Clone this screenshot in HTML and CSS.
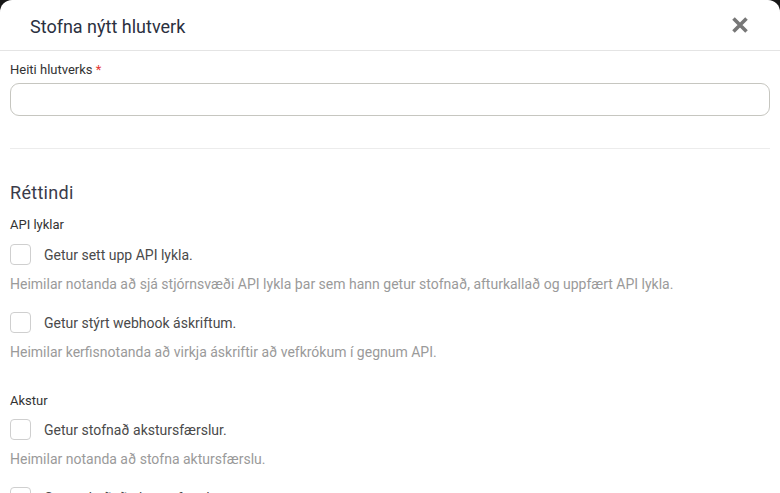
FILE: index.html
```html
<!DOCTYPE html>
<html lang="is">
<head>
<meta charset="utf-8">
<title>Stofna nýtt hlutverk</title>
<link rel="stylesheet" href="styles.css">
</head>
<body>
<div class="modal">
  <header class="modal-header">
    <h1 class="modal-title">Stofna nýtt hlutverk</h1>
    <button class="close-btn" aria-label="Loka">
      <svg width="18" height="18" viewBox="0 0 18 18"><path d="M2.5 2.5 L15.5 15.5 M15.5 2.5 L2.5 15.5" stroke="#777" stroke-width="3.6" stroke-linecap="butt"/></svg>
    </button>
  </header>
  <div class="modal-body">
    <label class="field-label">Heiti hlutverks <span class="req">*</span></label>
    <input class="text-input" type="text">
    <hr class="divider">
    <h2 class="section-title">Réttindi</h2>

    <div class="group">
      <div class="group-label">API lyklar</div>
      <div class="perm">
        <label class="check-row"><span class="checkbox"></span><span class="check-text">Getur sett upp API lykla.</span></label>
        <p class="desc">Heimilar notanda að sjá stjórnsvæði API lykla þar sem hann getur stofnað, afturkallað og uppfært API lykla.</p>
      </div>
      <div class="perm">
        <label class="check-row"><span class="checkbox"></span><span class="check-text">Getur stýrt webhook áskriftum.</span></label>
        <p class="desc">Heimilar kerfisnotanda að virkja áskriftir að vefkrókum í gegnum API.</p>
      </div>
    </div>

    <div class="group">
      <div class="group-label">Akstur</div>
      <div class="perm">
        <label class="check-row"><span class="checkbox"></span><span class="check-text">Getur stofnað akstursfærslur.</span></label>
        <p class="desc">Heimilar notanda að stofna aktursfærslu.</p>
      </div>
      <div class="perm">
        <label class="check-row"><span class="checkbox"></span><span class="check-text">Getur skoðað akstursfærslur.</span></label>
        <p class="desc">Heimilar notanda að skoða akstursfærslur.</p>
      </div>
    </div>
  </div>
</div>
</body>
</html>
```
FILE: styles.css
```css
html, body {
  margin: 0;
  padding: 0;
  background: #161616;
  height: 100%;
  overflow: hidden;
}
body {
  font-family: Roboto, "Liberation Sans", Arial, sans-serif;
  color: #333;
}
.modal {
  background: #fff;
  border-radius: 12px 12px 0 0;
  min-height: 100%;
}
.modal-header {
  height: 50px;
  border-bottom: 1px solid #e4e4e4;
  display: flex;
  align-items: center;
  justify-content: space-between;
  padding: 0 30px 0 30px;
}
.modal-title {
  margin: 0;
  font-size: 18px;
  font-weight: 400;
  color: #2b3040;
  line-height: 24px;
  padding-top: 3px;
}
.close-btn {
  border: 0;
  background: none;
  padding: 0;
  width: 18px;
  height: 18px;
  display: flex;
  cursor: pointer;
  margin-right: 1px;
  margin-top: 0;
}
.modal-body {
  padding: 0 10px;
}
.field-label {
  display: block;
  margin-top: 11px;
  font-size: 13px;
  line-height: 16px;
  color: #333;
}
.req { color: #e53935; }
.text-input {
  display: block;
  box-sizing: border-box;
  width: 100%;
  height: 33px;
  margin-top: 5px;
  border: 1px solid #c6c6c0;
  border-radius: 9px;
  background: #fff;
  font: inherit;
}
.divider {
  border: 0;
  border-top: 1px solid #ececec;
  margin: 32px 0 0 0;
}
.section-title {
  margin: 32px 0 0 0;
  font-size: 18px;
  line-height: 24px;
  font-weight: 400;
  color: #3a3b4a;
  letter-spacing: 0.3px;
}
.group {
  margin-top: 12px;
}
.group + .group {
  margin-top: 0;
  padding-top: 13px;
}
.group-label {
  font-size: 13px;
  line-height: 16px;
  color: #333;
  margin-bottom: 11px;
}
.group + .group .group-label {
  margin-bottom: 10px;
}
.perm {
  margin-bottom: 18px;
}
.check-row {
  display: flex;
  align-items: center;
  height: 21px;
  gap: 13px;
}
.checkbox {
  box-sizing: border-box;
  width: 21px;
  height: 21px;
  border: 1px solid #cfcfcf;
  border-radius: 4px;
  background: #fff;
  flex: none;
}
.check-text {
  font-size: 14px;
  color: #4a4a4a;
  line-height: 20px;
}
.desc {
  margin: 9px 0 0 0;
  font-size: 14px;
  line-height: 20px;
  color: #9a9a9a;
}
```
